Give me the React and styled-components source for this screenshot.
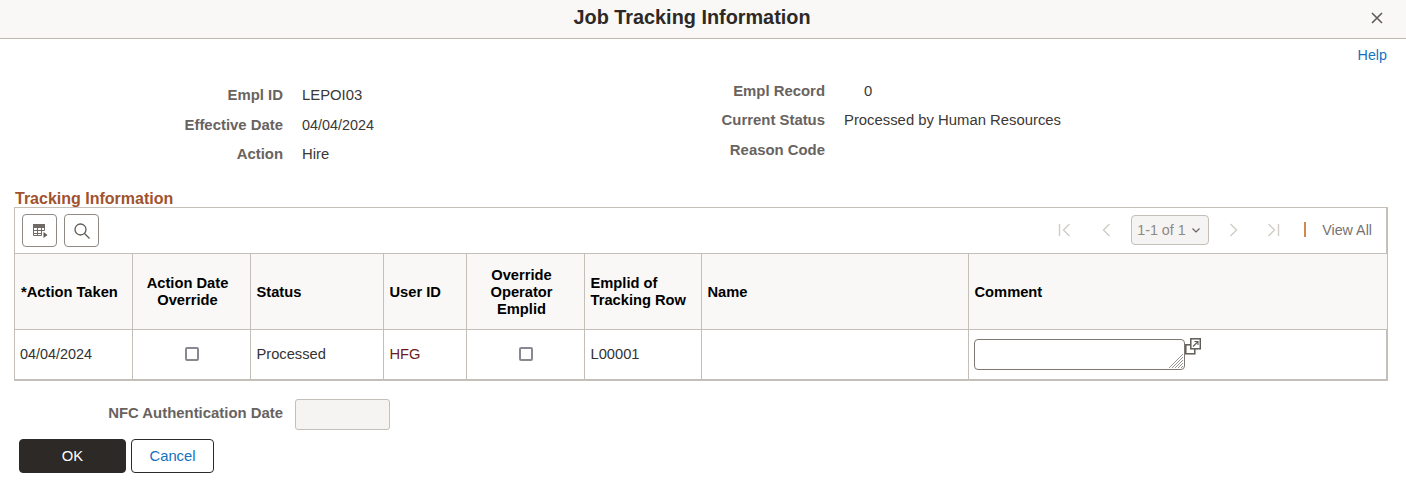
import styled, { createGlobalStyle } from "styled-components"

const GlobalStyle = createGlobalStyle`
  html, body { margin: 0; padding: 0; background: #fff; }
  body { font-family: "Liberation Sans", Arial, sans-serif; font-size: 14.7px; color: #333; }
`

const Page = styled.div`
  width: 1406px;
  height: 493px;
  overflow: hidden;
`

const Header = styled.header`
  height: 38px;
  background: #f9f8f6;
  border-bottom: 1px solid #bfb9b2;
  display: flex;
  align-items: center;
  justify-content: center;
  position: relative;
`

const Title = styled.h1`
  margin: 0 22px 4px 0;
  font-size: 19.85px;
  font-weight: bold;
  color: #2d2926;
`

const CloseButton = styled.button`
  position: absolute;
  right: 21px;
  top: 10px;
  width: 16px;
  height: 16px;
  padding: 0;
  border: 0;
  background: none;
  display: flex;
`

const HelpRow = styled.div`
  height: 32px;
  display: flex;
  justify-content: flex-end;
  align-items: center;
  padding-right: 19px;
`

const Link = styled.a`
  color: #1571c0;
  text-decoration: none;
  font-size: 14.3px;
`

const Info = styled.div`
  display: flex;
  height: 118px;
`

const InfoColumn = styled.div`
  width: ${(p) => p.$width}px;
  padding-top: ${(p) => p.$top}px;
`

const InfoRow = styled.div`
  height: 29.5px;
  display: flex;
  align-items: center;
  gap: 19px;
`

const Label = styled.span`
  width: ${(p) => p.$width}px;
  flex-shrink: 0;
  text-align: right;
  font-size: 14.9px;
  font-weight: bold;
  color: #68635f;
`

const Value = styled.span`
  color: #3c3835;
  font-size: 14.85px;
  padding-left: ${(p) => p.$indent || 0}px;
`

const DateValue = styled(Value)`
  font-size: 14.4px;
`

const SectionTitle = styled.h2`
  margin: 0 0 0 15px;
  height: 18px;
  line-height: 19px;
  font-size: 16px;
  font-weight: bold;
  color: #a0522d;
`

const GridBox = styled.div`
  margin-left: 14px;
  width: 1374px;
  box-sizing: border-box;
  border: 1px solid #c4bfb9;
  border-bottom: 2px solid #c4bfb9;
  border-right-width: 2px;
`

const Toolbar = styled.div`
  height: 45px;
  display: flex;
  align-items: center;
  padding: 0 14px 0 7px;
  gap: 7px;
`

const ToolButton = styled.button`
  width: 35px;
  height: 33px;
  padding: 0;
  box-sizing: border-box;
  background: #fff;
  border: 1px solid #8f8a85;
  border-radius: 4px;
  display: flex;
  align-items: center;
  justify-content: center;
`

const Pager = styled.div`
  margin-left: auto;
  margin-bottom: 2px;
  display: flex;
  align-items: center;
  font-size: 14.3px;
`

const PagerIcon = styled.span`
  width: ${(p) => p.$width}px;
  display: flex;
  justify-content: center;
`

const PageSelect = styled.div`
  width: 78px;
  height: 30px;
  margin: 0 4px;
  box-sizing: border-box;
  background: #f5f4f2;
  border: 1px solid #c4bfb9;
  border-radius: 4px;
  display: flex;
  align-items: center;
  justify-content: space-between;
  padding: 0 7px 0 5px;
  color: #8d8984;
`

const Divider = styled.span`
  width: 2px;
  height: 15px;
  margin: 0 16px 0 11px;
  background: #d08a4c;
`

const ViewAll = styled.span`
  color: #77726e;
`

const Table = styled.table`
  width: 1372px;
  table-layout: fixed;
  border-collapse: collapse;
`

const HeadCell = styled.th`
  height: 76px;
  padding: 1px ${(p) => (p.$center ? "12px" : "6px")} 0 ${(p) => (p.$center ? "5px" : "6px")};
  box-sizing: border-box;
  background: #f9f8f6;
  border-top: 1px solid #c4bfb9;
  border-bottom: 1px solid #c4bfb9;
  border-left: 1px solid #c4bfb9;
  line-height: 17px;
  color: #000;
  text-align: ${(p) => (p.$center ? "center" : "left")};
  &:first-child { border-left: 0; }
`

const Cell = styled.td`
  height: 49px;
  padding: 0 5px 0 6px;
  box-sizing: border-box;
  border-left: 1px solid #c4bfb9;
  color: ${(p) => p.$color || "#333"};
  font-size: ${(p) => p.$size || "14.7px"};
  text-align: ${(p) => (p.$center ? "center" : "left")};
  &:first-child { border-left: 0; padding-left: 5px; }
  &:last-child { padding-left: 5px; }
`

const CheckBox = styled.span`
  display: block;
  width: 14px;
  height: 14px;
  margin: 0 auto;
  box-sizing: border-box;
  border: 2px solid #8a8791;
  border-radius: 2px;
  background: #fff;
`

const CommentWrap = styled.div`
  display: flex;
  align-items: flex-start;
`

const CommentBox = styled.div`
  position: relative;
  width: 211px;
  height: 31px;
  box-sizing: border-box;
  border: 1px solid #7d7873;
  border-radius: 4px;
  background: #fff;
`

const Grip = styled.svg`
  position: absolute;
  right: 0;
  bottom: 0;
`

const PopupIcon = styled.svg`
  margin: -1px 0 0 0;
`

const Footer = styled.div`
  padding-top: 18px;
`

const AuthRow = styled.div`
  display: flex;
  align-items: center;
  gap: 12px;
`

const AuthLabel = styled(Label)`
  margin-bottom: 2px;
`

const DisabledInput = styled.div`
  width: 95px;
  height: 31px;
  box-sizing: border-box;
  background: #f5f4f2;
  border: 1px solid #c4bfb9;
  border-radius: 3px;
`

const Buttons = styled.div`
  display: flex;
  gap: 5px;
  margin: 9px 0 0 19px;
`

const ActionButton = styled.button`
  width: ${(p) => p.$width}px;
  height: 34px;
  box-sizing: border-box;
  border-radius: 4px;
  border: 1px solid #2d2926;
  background: ${(p) => (p.$primary ? "#2d2926" : "#fff")};
  color: ${(p) => (p.$primary ? "#fff" : "#1571c0")};
  font-family: inherit;
  font-size: 14.8px;
  padding: 0;
`

const columns = [117, 118, 133, 83, 118, 117, 267, 419]

const Chevron = ({ dir, bar }) => (
  <svg width="16" height="16" viewBox="0 0 16 16" fill="none" stroke="#d0ccc8" strokeWidth="1.4">
    <path d={dir === "left" ? "M10.5 2 4.5 8l6 6" : "M5.5 2l6 6-6 6"} transform={bar ? (dir === "left" ? "translate(2 0)" : "translate(-2 0)") : undefined} />
    {bar && <path d={dir === "left" ? "M2.5 2v12" : "M13.5 2v12"} />}
  </svg>
)

const App = () => {
  return (
    <Page>
      <GlobalStyle />
      <Header>
        <Title>Job Tracking Information</Title>
        <CloseButton aria-label="Close">
          <svg width="16" height="16" viewBox="0 0 16 16" fill="none" stroke="#5f5b57" strokeWidth="1.6">
            <path d="M3 3l10 10M13 3 3 13" />
          </svg>
        </CloseButton>
      </Header>
      <HelpRow>
        <Link href="#">Help</Link>
      </HelpRow>

      <Info>
        <InfoColumn $width={544} $top={9.5}>
          <InfoRow><Label $width={283}>Empl ID</Label><Value>LEPOI03</Value></InfoRow>
          <InfoRow><Label $width={283}>Effective Date</Label><DateValue>04/04/2024</DateValue></InfoRow>
          <InfoRow><Label $width={283}>Action</Label><Value>Hire</Value></InfoRow>
        </InfoColumn>
        <InfoColumn $width={600} $top={5}>
          <InfoRow><Label $width={281}>Empl Record</Label><Value $indent={20}>0</Value></InfoRow>
          <InfoRow><Label $width={281}>Current Status</Label><Value>Processed by Human Resources</Value></InfoRow>
          <InfoRow><Label $width={281}>Reason Code</Label></InfoRow>
        </InfoColumn>
      </Info>

      <SectionTitle>Tracking Information</SectionTitle>
      <GridBox>
        <Toolbar>
          <ToolButton aria-label="Personalize">
            <svg width="16" height="16" viewBox="0 0 16 16" fill="none" stroke="#6f6a66" strokeWidth="1">
              <rect x="1.5" y="1.5" width="11" height="3" fill="#6f6a66" />
              <path d="M1.5 1.5v11h8M12.5 1.5v6M1.5 7.5h11M1.5 10.5h8M5.5 4.5v8M9.5 4.5v8" />
              <path d="M11.5 9l4 3-4 3z" fill="#5f5b57" stroke="none" />
            </svg>
          </ToolButton>
          <ToolButton aria-label="Find">
            <svg width="18" height="18" viewBox="0 0 18 18" fill="none" stroke="#5f5b57" strokeWidth="1.3">
              <circle cx="7.5" cy="7.5" r="5.5" />
              <path d="M11.5 11.5 16.5 16.5" />
            </svg>
          </ToolButton>
          <Pager>
            <PagerIcon $width={44}><Chevron dir="left" bar /></PagerIcon>
            <PagerIcon $width={40}><Chevron dir="left" /></PagerIcon>
            <PageSelect>
              1-1 of 1
              <svg width="10" height="10" viewBox="0 0 10 10" fill="none" stroke="#68635f" strokeWidth="1.2">
                <path d="M1.5 3.5 5 7l3.5-3.5" />
              </svg>
            </PageSelect>
            <PagerIcon $width={40}><Chevron dir="right" /></PagerIcon>
            <PagerIcon $width={40}><Chevron dir="right" bar /></PagerIcon>
            <Divider />
            <ViewAll>View All</ViewAll>
          </Pager>
        </Toolbar>
        <Table>
          <colgroup>
            {columns.map((w, i) => <col key={i} style={{ width: w }} />)}
          </colgroup>
          <thead>
            <tr>
              <HeadCell>*Action Taken</HeadCell>
              <HeadCell $center>Action Date Override</HeadCell>
              <HeadCell>Status</HeadCell>
              <HeadCell>User ID</HeadCell>
              <HeadCell $center>Override Operator Emplid</HeadCell>
              <HeadCell>Emplid of Tracking Row</HeadCell>
              <HeadCell>Name</HeadCell>
              <HeadCell>Comment</HeadCell>
            </tr>
          </thead>
          <tbody>
            <tr>
              <Cell $size="14.4px">04/04/2024</Cell>
              <Cell $center><CheckBox /></Cell>
              <Cell>Processed</Cell>
              <Cell $color="#6e1a1a">HFG</Cell>
              <Cell $center><CheckBox /></Cell>
              <Cell>L00001</Cell>
              <Cell />
              <Cell>
                <CommentWrap>
                  <CommentBox>
                    <Grip width="16" height="16" viewBox="0 0 16 16" stroke="#999590" strokeWidth="1">
                      <path d="M1 15 15 1M4 15 15 4M7 15 15 7M10 15l5-5M13 15l2-2" />
                    </Grip>
                  </CommentBox>
                  <PopupIcon width="16" height="17" viewBox="0 0 16 17" fill="none" stroke="#5f5b57" strokeWidth="1.5">
                    <rect x="0.8" y="6.8" width="9" height="9" />
                    <rect x="5.8" y="0.8" width="9.5" height="10" fill="#fff" />
                    <path d="M8 8.5 13 3.5M9.5 3.5H13V7" strokeWidth="1.1" />
                  </PopupIcon>
                </CommentWrap>
              </Cell>
            </tr>
          </tbody>
        </Table>
      </GridBox>

      <Footer>
        <AuthRow>
          <AuthLabel $width={283}>NFC Authentication Date</AuthLabel>
          <DisabledInput />
        </AuthRow>
        <Buttons>
          <ActionButton $primary $width={107}>OK</ActionButton>
          <ActionButton $width={83}>Cancel</ActionButton>
        </Buttons>
      </Footer>
    </Page>
  )
}

export default App
